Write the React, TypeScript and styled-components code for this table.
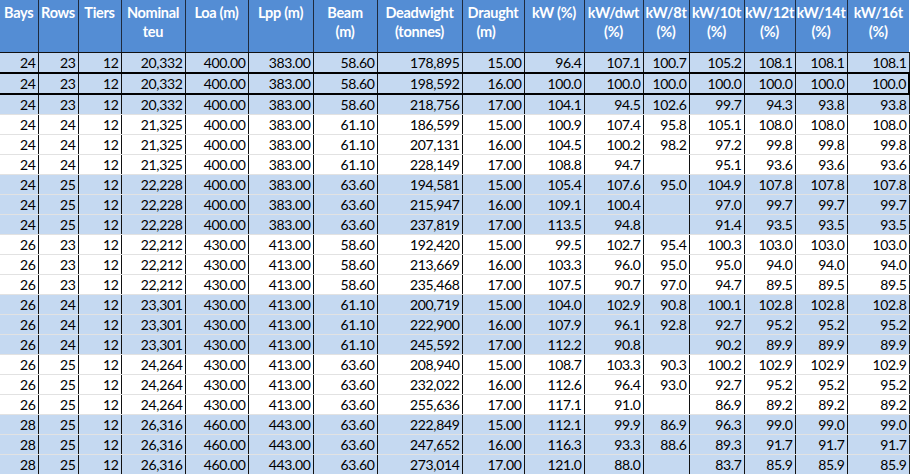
import React from "react";
import styled, { createGlobalStyle } from "styled-components";

const GlobalStyle = createGlobalStyle`
  body {
    margin: 0;
    background: #ffffff;
    font-family: Lato, "Liberation Sans", sans-serif;
  }
`;

type Align = "center" | "left";

const columns: { label: string[]; width: number; align?: Align }[] = [
  { label: ["Bays"], width: 38 },
  { label: ["Rows"], width: 40 },
  { label: ["Tiers"], width: 43 },
  { label: ["Nominal", "teu"], width: 64 },
  { label: ["Loa (m)"], width: 63 },
  { label: ["Lpp (m)"], width: 65 },
  { label: ["Beam", "(m)"], width: 64 },
  { label: ["Deadwight", "(tonnes)"], width: 85 },
  { label: ["Draught", "(m)"], width: 62, align: "left" },
  { label: ["kW (%)"], width: 60 },
  { label: ["kW/dwt", "(%)"], width: 59 },
  { label: ["kW/8t", "(%)"], width: 46 },
  { label: ["kW/10t", "(%)"], width: 55 },
  { label: ["kW/12t", "(%)"], width: 51 },
  { label: ["kW/14t", "(%)"], width: 52 },
  { label: ["kW/16t", "(%)"], width: 62 },
];

const rows: string[][] = [
  ["24", "23", "12", "20,332", "400.00", "383.00", "58.60", "178,895", "15.00", "96.4", "107.1", "100.7", "105.2", "108.1", "108.1", "108.1"],
  ["24", "23", "12", "20,332", "400.00", "383.00", "58.60", "198,592", "16.00", "100.0", "100.0", "100.0", "100.0", "100.0", "100.0", "100.0"],
  ["24", "23", "12", "20,332", "400.00", "383.00", "58.60", "218,756", "17.00", "104.1", "94.5", "102.6", "99.7", "94.3", "93.8", "93.8"],
  ["24", "24", "12", "21,325", "400.00", "383.00", "61.10", "186,599", "15.00", "100.9", "107.4", "95.8", "105.1", "108.0", "108.0", "108.0"],
  ["24", "24", "12", "21,325", "400.00", "383.00", "61.10", "207,131", "16.00", "104.5", "100.2", "98.2", "97.2", "99.8", "99.8", "99.8"],
  ["24", "24", "12", "21,325", "400.00", "383.00", "61.10", "228,149", "17.00", "108.8", "94.7", "", "95.1", "93.6", "93.6", "93.6"],
  ["24", "25", "12", "22,228", "400.00", "383.00", "63.60", "194,581", "15.00", "105.4", "107.6", "95.0", "104.9", "107.8", "107.8", "107.8"],
  ["24", "25", "12", "22,228", "400.00", "383.00", "63.60", "215,947", "16.00", "109.1", "100.4", "", "97.0", "99.7", "99.7", "99.7"],
  ["24", "25", "12", "22,228", "400.00", "383.00", "63.60", "237,819", "17.00", "113.5", "94.8", "", "91.4", "93.5", "93.5", "93.5"],
  ["26", "23", "12", "22,212", "430.00", "413.00", "58.60", "192,420", "15.00", "99.5", "102.7", "95.4", "100.3", "103.0", "103.0", "103.0"],
  ["26", "23", "12", "22,212", "430.00", "413.00", "58.60", "213,669", "16.00", "103.3", "96.0", "95.0", "95.0", "94.0", "94.0", "94.0"],
  ["26", "23", "12", "22,212", "430.00", "413.00", "58.60", "235,468", "17.00", "107.5", "90.7", "97.0", "94.7", "89.5", "89.5", "89.5"],
  ["26", "24", "12", "23,301", "430.00", "413.00", "61.10", "200,719", "15.00", "104.0", "102.9", "90.8", "100.1", "102.8", "102.8", "102.8"],
  ["26", "24", "12", "23,301", "430.00", "413.00", "61.10", "222,900", "16.00", "107.9", "96.1", "92.8", "92.7", "95.2", "95.2", "95.2"],
  ["26", "24", "12", "23,301", "430.00", "413.00", "61.10", "245,592", "17.00", "112.2", "90.8", "", "90.2", "89.9", "89.9", "89.9"],
  ["26", "25", "12", "24,264", "430.00", "413.00", "63.60", "208,940", "15.00", "108.7", "103.3", "90.3", "100.2", "102.9", "102.9", "102.9"],
  ["26", "25", "12", "24,264", "430.00", "413.00", "63.60", "232,022", "16.00", "112.6", "96.4", "93.0", "92.7", "95.2", "95.2", "95.2"],
  ["26", "25", "12", "24,264", "430.00", "413.00", "63.60", "255,636", "17.00", "117.1", "91.0", "", "86.9", "89.2", "89.2", "89.2"],
  ["28", "25", "12", "26,316", "460.00", "443.00", "63.60", "222,849", "15.00", "112.1", "99.9", "86.9", "96.3", "99.0", "99.0", "99.0"],
  ["28", "25", "12", "26,316", "460.00", "443.00", "63.60", "247,652", "16.00", "116.3", "93.3", "88.6", "89.3", "91.7", "91.7", "91.7"],
  ["28", "25", "12", "26,316", "460.00", "443.00", "63.60", "273,014", "17.00", "121.0", "88.0", "", "83.7", "85.9", "85.9", "85.9"],
];

// the 16t reference row is boxed in the sheet
const MARKED_ROW = 1;

const Sheet = styled.table`
  border-collapse: collapse;
  table-layout: fixed;
  width: 909px;
  font-size: 14px;
  color: #000;
`;

const HeadCell = styled.th<{ $align: Align }>`
  height: 52px;
  padding: 3px 0 0;
  box-sizing: border-box;
  vertical-align: top;
  background: #548dd4;
  color: #ffffff;
  font-weight: 700;
  font-size: 14.5px;
  letter-spacing: -0.3px;
  line-height: 19px;
  text-align: center;
  border-left: 1px solid #1f2b3d;
  border-bottom: 1px solid #111;
  white-space: nowrap;
  overflow: hidden;

  &:first-child {
    border-left: none;
  }

  span {
    display: block;
  }

  span + span {
    text-align: ${(p) => p.$align};
    padding-left: ${(p) => (p.$align === "left" ? "14px" : "0")};
  }
`;

const Row = styled.tr<{ $shade: boolean; $marked: boolean }>`
  background: ${(p) => (p.$shade ? "#c5d9f1" : "#ffffff")};

  td {
    border-top: ${(p) => (p.$marked ? "2px solid #000" : "1px solid #e2e2e2")};
    border-bottom: ${(p) => (p.$marked ? "2px solid #000" : "1px solid #e2e2e2")};
  }

  td:last-child {
    border-right: ${(p) => (p.$marked ? "2px solid #000" : "1px solid #222")};
  }
`;

const Cell = styled.td`
  height: 19px;
  padding: 0 2px 0 0;
  line-height: 19px;
  text-align: right;
  letter-spacing: -0.35px;
  border-left: 1px solid #111;
  white-space: nowrap;
  overflow: hidden;

  &:first-child {
    border-left: none;
  }
`;

const App = () => {
  return (
    <>
      <GlobalStyle />
      <Sheet>
        <colgroup>
          {columns.map((c, i) => (
            <col key={i} style={{ width: c.width }} />
          ))}
        </colgroup>
        <thead>
          <tr>
            {columns.map((c, i) => (
              <HeadCell key={i} $align={c.align ?? "center"}>
                {c.label.map((line, j) => (
                  <span key={j}>{line}</span>
                ))}
              </HeadCell>
            ))}
          </tr>
        </thead>
        <tbody>
          {rows.map((r, i) => (
            <Row
              key={i}
              $shade={Math.floor(i / 3) % 2 === 0}
              $marked={i === MARKED_ROW}
            >
              {r.map((v, j) => (
                <Cell key={j}>{v}</Cell>
              ))}
            </Row>
          ))}
        </tbody>
      </Sheet>
    </>
  );
};

export default App;
